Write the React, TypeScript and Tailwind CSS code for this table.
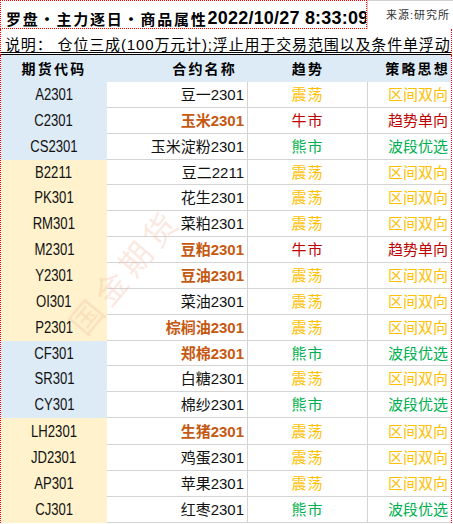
const rows = [
  { code: 'A2301', name: '豆一2301', hot: false, trend: 'range', blue: true, h: 'h-[26px]' },
  { code: 'C2301', name: '玉米2301', hot: true, trend: 'bull', blue: true, h: 'h-[26px]' },
  { code: 'CS2301', name: '玉米淀粉2301', hot: false, trend: 'bear', blue: true, h: 'h-[26px]' },
  { code: 'B2211', name: '豆二2211', hot: false, trend: 'range', blue: false, h: 'h-[25px]' },
  { code: 'PK301', name: '花生2301', hot: false, trend: 'range', blue: false, h: 'h-[26px]' },
  { code: 'RM301', name: '菜粕2301', hot: false, trend: 'range', blue: false, h: 'h-[26px]' },
  { code: 'M2301', name: '豆粕2301', hot: true, trend: 'bull', blue: false, h: 'h-[26px]' },
  { code: 'Y2301', name: '豆油2301', hot: true, trend: 'range', blue: false, h: 'h-[26px]' },
  { code: 'OI301', name: '菜油2301', hot: false, trend: 'range', blue: false, h: 'h-[26px]' },
  { code: 'P2301', name: '棕榈油2301', hot: true, trend: 'range', blue: false, h: 'h-[26px]' },
  { code: 'CF301', name: '郑棉2301', hot: true, trend: 'bear', blue: true, h: 'h-[25px]' },
  { code: 'SR301', name: '白糖2301', hot: false, trend: 'range', blue: true, h: 'h-[26px]' },
  { code: 'CY301', name: '棉纱2301', hot: false, trend: 'bear', blue: true, h: 'h-[26px]' },
  { code: 'LH2301', name: '生猪2301', hot: true, trend: 'range', blue: false, h: 'h-[27px]' },
  { code: 'JD2301', name: '鸡蛋2301', hot: false, trend: 'range', blue: false, h: 'h-[26px]' },
  { code: 'AP301', name: '苹果2301', hot: false, trend: 'range', blue: false, h: 'h-[26px]' },
  { code: 'CJ301', name: '红枣2301', hot: false, trend: 'bear', blue: false, h: 'h-[26px]' },
]

const trends: Record<string, { label: string; plan: string; color: string }> = {
  range: { label: '震荡', plan: '区间双向', color: 'text-[#ffc000]' },
  bull: { label: '牛市', plan: '趋势单向', color: 'text-[#c00000]' },
  bear: { label: '熊市', plan: '波段优选', color: 'text-[#00b050]' },
}

const cjk = "font-['Liberation_Sans','Noto_Sans_CJK_SC',sans-serif]"

export default function App() {
  return (
    <div className={`relative w-[453px] h-[524px] overflow-hidden bg-white text-black ${cjk}`}>
      <div className="flex h-[29px]">
        <div className="w-[367px] h-[29px] border border-dotted border-[#ff0000] overflow-hidden whitespace-nowrap flex items-end pl-[5px] pb-[1px] font-bold">
          <span className="text-[15px] tracking-[1.8px] leading-none">罗盘・主力逐日・商品属性</span>
          <span className="text-[18px] tracking-[0.2px] leading-none">2022/10/27 8:33:09</span>
        </div>
        <div className="flex-1 border-t border-l border-[#d0d0d0] text-[11px] tracking-[1px] text-right pr-[3px] pt-[9px] leading-none text-[#333]">
          来源:研究所
        </div>
      </div>

      <div className="w-[452px] h-[26px] border-x border-dotted border-[#ff0000] relative">
        <div className="absolute inset-x-0 bottom-0 border-b-[3px] border-double border-black" />
        <div className="flex items-end h-[23px] pl-[4px] whitespace-nowrap overflow-hidden text-[15px] leading-none tracking-[0.85px]">
          说明：&nbsp;仓位三成(100万元计);浮止用于交易范围以及条件单浮动
        </div>
      </div>

      <div className="w-[452px] border-x border-dotted border-[#ff0000]">
        <div className="grid grid-cols-[106px_141px_120px_83px] h-[27px] bg-[#ddebf7] font-bold text-[14px] tracking-[2.2px] leading-none">
          <div className="flex items-center justify-center">期货代码</div>
          <div className="flex items-center justify-end pr-[11px]">合约名称</div>
          <div className="flex items-center justify-center">趋势</div>
          <div className="flex items-center justify-end pr-[1px]">策略思想</div>
        </div>

        {rows.map((r) => {
          const t = trends[r.trend]
          return (
            <div key={r.code} className={`grid grid-cols-[106px_141px_120px_83px] ${r.h} text-[15px] leading-none`}>
              <div
                className={`flex items-center justify-center text-[#111] ${
                  r.blue ? 'bg-[#ddebf7]' : 'bg-[#fff2cc]'
                }`}
              >
                <span className="inline-block text-[16px] scale-x-[0.82]">{r.code}</span>
              </div>
              <div
                className={`flex items-center justify-end pr-[3px] border-b border-r border-[#d4d4d4] ${
                  r.hot ? 'font-bold text-[#c65911]' : 'text-[#111]'
                }`}
              >
                {r.name}
              </div>
              <div className={`flex items-center justify-center border-b border-r border-[#d4d4d4] tracking-[1px] ${t.color}`}>
                {t.label}
              </div>
              <div className={`flex items-center justify-end pr-[3px] border-b border-[#d4d4d4] ${t.color}`}>
                {t.plan}
              </div>
            </div>
          )
        })}
      </div>

      <div className="pointer-events-none absolute left-[126px] top-[272px] -translate-x-1/2 -translate-y-1/2 rotate-[-50deg] whitespace-nowrap text-[32px] tracking-[6px] leading-none text-[#f4b89f] opacity-30">
        国金期货
      </div>
    </div>
  )
}
